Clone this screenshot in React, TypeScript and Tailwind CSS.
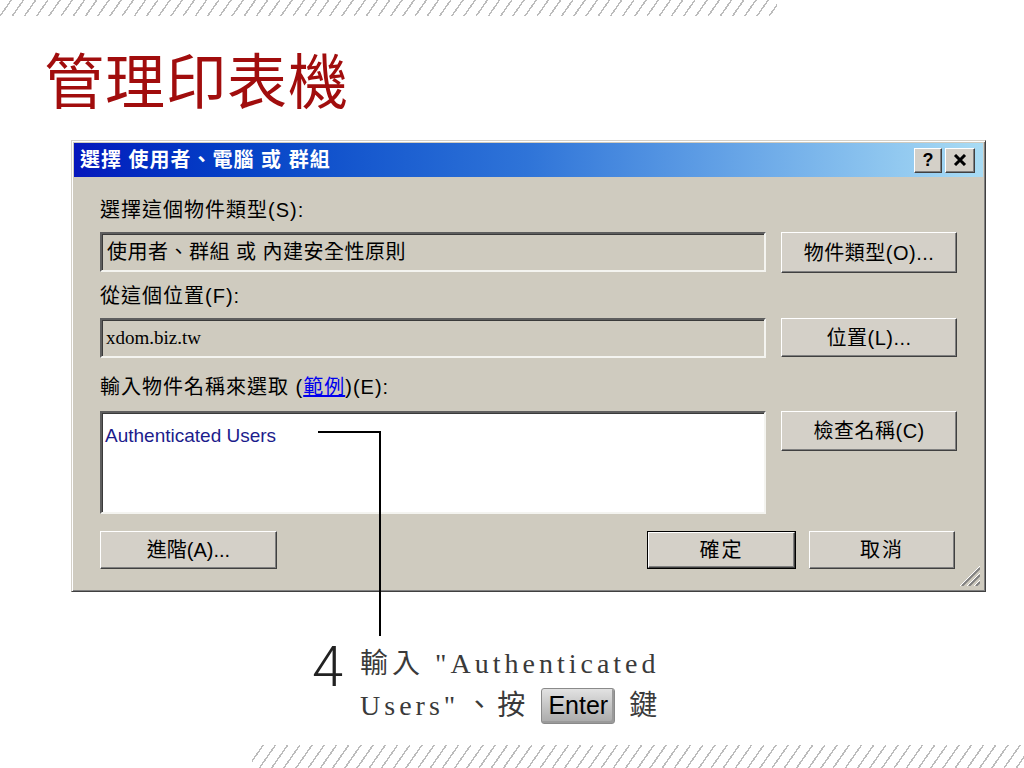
import type { ReactNode } from 'react'

const hatch =
  'bg-[repeating-linear-gradient(125deg,transparent_0px,transparent_8.5px,#bcbcbc_8.5px,#bcbcbc_10px)]'

function RaisedButton({ children, className = '' }: { children: ReactNode; className?: string }) {
  return (
    <div
      className={`flex items-center justify-center border border-t-white border-l-white border-r-[#404040] border-b-[#404040] bg-[#d4d0c8] shadow-[inset_-1px_-1px_0_#808080] ${className}`}
    >
      {children}
    </div>
  )
}

function Field({ children, className = '' }: { children?: ReactNode; className?: string }) {
  return (
    <div
      className={`border-2 border-t-[#5e5e5e] border-l-[#5e5e5e] border-r-[#f4f4f0] border-b-[#f4f4f0] shadow-[inset_1px_1px_0_#3a3a3a] ${className}`}
    >
      {children}
    </div>
  )
}

function Grip() {
  return (
    <svg width="24" height="24" viewBox="0 0 24 24" className="absolute right-[5px] bottom-[5px]">
      {[4, 11, 18].map((o) => (
        <g key={o}>
          <line x1={24 - o} y1="24" x2="24" y2={24 - o} stroke="#808080" strokeWidth="2" />
          <line x1={22 - o} y1="24" x2="24" y2={22 - o} stroke="#ffffff" strokeWidth="1" />
        </g>
      ))}
    </svg>
  )
}

function Dialog() {
  return (
    <div className="relative ml-[71px] mt-[32px] h-[452px] w-[915px] border border-t-[#d4d0c8] border-l-[#d4d0c8] border-r-[#404040] border-b-[#404040] bg-[#cfcbbf] shadow-[inset_1px_1px_0_#ffffff,inset_-1px_-1px_0_#808080] p-[2px] font-['Liberation_Sans','Noto_Sans_CJK_TC',sans-serif] text-black">
      <div className="flex h-[34px] items-center bg-linear-to-r from-[#0616bc] via-[#2f74d8] to-[#a9dcf4] pl-[6px] pr-[8px]">
        <span className="text-[20px] font-bold tracking-[1px] text-white">選擇 使用者、電腦 或 群組</span>
        <div className="ml-auto flex gap-[3px]">
          <RaisedButton className="h-[25px] w-[28px] text-[18px] font-bold leading-none">?</RaisedButton>
          <RaisedButton className="h-[25px] w-[30px]">
            <svg width="14" height="12" viewBox="0 0 14 12">
              <path d="M2 1 L12 11 M12 1 L2 11" stroke="#000" strokeWidth="3" />
            </svg>
          </RaisedButton>
        </div>
      </div>

      <div className="px-[26px] pt-[21px] text-[20px]">
        <div className="h-[24px] leading-[24px] tracking-[1px]">選擇這個物件類型(S):</div>
        <div className="mt-[10px] flex gap-[15px]">
          <Field className="flex h-[40px] w-[667px] items-center pl-[5px]">
            <span className="text-[20px] tracking-[0.5px]">使用者、群組 或 內建安全性原則</span>
          </Field>
          <RaisedButton className="h-[41px] w-[176px] tracking-[0.5px]">物件類型(O)...</RaisedButton>
        </div>

        <div className="mt-[11px] h-[24px] leading-[24px] tracking-[1px]">從這個位置(F):</div>
        <div className="mt-[10px] flex gap-[15px]">
          <Field className="flex h-[40px] w-[667px] items-center pl-[4px]">
            <span className="font-['Liberation_Serif',serif] text-[19px]">xdom.biz.tw</span>
          </Field>
          <RaisedButton className="h-[39px] w-[176px] tracking-[0.5px]">位置(L)...</RaisedButton>
        </div>

        <div className="mt-[17px] h-[24px] leading-[24px] tracking-[1px]">
          輸入物件名稱來選取 (<span className="text-[#0000ee] underline">範例</span>)(E):
        </div>
        <div className="mt-[12px] flex gap-[15px]">
          <Field className="h-[103px] w-[667px] bg-white pl-[3px] pt-[7px]">
            <span className="font-['Liberation_Sans',sans-serif] text-[19px] text-[#1c1c8c]">Authenticated Users</span>
          </Field>
          <RaisedButton className="h-[40px] w-[176px] tracking-[0.5px]">檢查名稱(C)</RaisedButton>
        </div>

        <div className="mt-[17px] flex items-center">
          <RaisedButton className="h-[38px] w-[177px]">進階(A)...</RaisedButton>
          <div className="ml-auto border border-black">
            <RaisedButton className="h-[36px] w-[147px] tracking-[2px]">確定</RaisedButton>
          </div>
          <RaisedButton className="ml-[13px] mr-[2px] h-[38px] w-[146px] tracking-[2px]">取消</RaisedButton>
        </div>
      </div>
      <Grip />
    </div>
  )
}

export default function App() {
  return (
    <div className="relative flex h-[768px] w-[1024px] flex-col overflow-hidden bg-white">
      <div className={`h-[16px] w-[777px] shrink-0 ${hatch}`} />

      <div className="ml-[44px] mt-[32px] h-[60px] font-['Noto_Sans_CJK_TC',serif] text-[60px] leading-[60px] tracking-[1px] text-[#a10d0d]">
        管理印表機
      </div>

      <Dialog />

      <div className="ml-[312px] mt-[46px] flex items-start">
        <div className="font-['Roboto','Liberation_Sans',sans-serif] text-[56px] font-light leading-[58px] text-[#222]">4</div>
        <div className="ml-[17px] mt-[8px] font-['Liberation_Serif','Noto_Sans_CJK_TC',serif] text-[28px] tracking-[4px] text-[#3a3a3a]">
          <div className="h-[36px] leading-[36px]">輸入 "Authenticated</div>
          <div className="mt-[4px] flex h-[40px] items-center">
            <span>Users"</span>
            <span className="ml-[6px]">、按</span>
            <span className="ml-[12px] mr-[14px] flex h-[36px] w-[74px] items-center justify-center rounded-[3px] border border-[#8a8a8a] bg-linear-to-b from-[#e2e2e2] to-[#a9a9a9] font-['Liberation_Sans',sans-serif] text-[25px] tracking-normal text-black shadow-[inset_-2px_-2px_0_#9a9a9a]">
              Enter
            </span>
            <span>鍵</span>
          </div>
        </div>
      </div>

      <div className={`ml-[252px] mt-auto h-[23px] shrink-0 ${hatch}`} />

      <svg className="pointer-events-none absolute left-0 top-0" width="1024" height="768">
        <polyline points="318,432 380,432 380,636" fill="none" stroke="#000" strokeWidth="2" />
      </svg>
    </div>
  )
}
